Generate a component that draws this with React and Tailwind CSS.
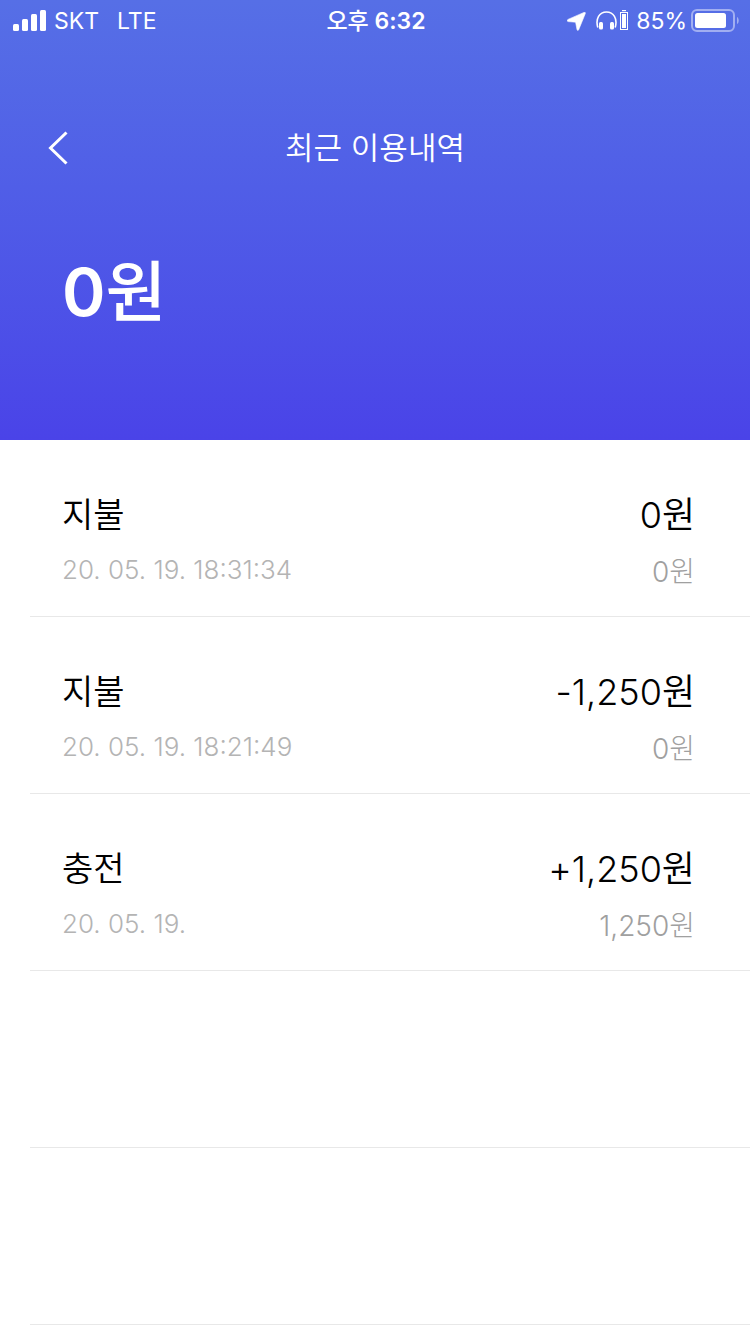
const transactions = [
  { id: 1, type: '지불', date: '20. 05. 19. 18:31:34', amount: '0원', balance: '0원' },
  { id: 2, type: '지불', date: '20. 05. 19. 18:21:49', amount: '-1,250원', balance: '0원' },
  { id: 3, type: '충전', date: '20. 05. 19.', amount: '+1,250원', balance: '1,250원' },
];

const emptyRows = [4, 5];

const SignalIcon = () => (
  <svg width="33" height="22" viewBox="0 0 33 22" fill="currentColor" aria-hidden="true">
    <rect x="0" y="14" width="6" height="7" rx="1.5" />
    <rect x="9" y="9" width="6" height="12" rx="1.5" />
    <rect x="18" y="4" width="6" height="17" rx="1.5" />
    <rect x="27" y="0" width="6" height="21" rx="1.5" />
  </svg>
);

const LocationIcon = () => (
  <svg width="19" height="19" viewBox="0 0 19 19" fill="currentColor" aria-hidden="true">
    <path d="M17 0.4 L1 7.4 C-0.2 8 0 9.4 1.2 9.6 L8.6 10.2 L10 17.6 C10.2 18.6 11.3 18.7 11.7 17.7 L18.3 1.6 C18.7 0.6 18 -0.1 17 0.4 Z" stroke="currentColor" strokeWidth="0.6" />
  </svg>
);

const HeadphonesIcon = () => (
  <svg width="32" height="22" viewBox="0 0 32 22" aria-hidden="true">
    <path d="M1.8 17.5 C-0.8 8.5 3.5 2 10.5 2 C17.5 2 21.8 8.5 19.2 17.5" fill="none" stroke="currentColor" strokeWidth="1.6" />
    <rect x="3" y="12" width="4" height="7.5" rx="1.5" fill="currentColor" />
    <rect x="14" y="12" width="4" height="7.5" rx="1.5" fill="currentColor" />
    <rect x="24.5" y="2.5" width="7" height="17" fill="none" stroke="currentColor" />
    <rect x="26" y="4" width="4" height="14" fill="currentColor" />
    <rect x="26" y="0" width="4" height="1.2" fill="currentColor" />
  </svg>
);

const BatteryIcon = () => (
  <svg width="48" height="24" viewBox="0 0 48 24" aria-hidden="true">
    <rect x="1" y="1" width="42" height="21" rx="5" fill="none" stroke="currentColor" strokeOpacity="0.45" strokeWidth="2" />
    <rect x="4" y="4" width="31" height="15" rx="2.5" fill="currentColor" />
    <path d="M46 8 C48.3 9 48.3 14 46 15 Z" fill="currentColor" fillOpacity="0.45" />
  </svg>
);

const StatusBar = () => (
  <div className="grid grid-cols-[1fr_auto_1fr] items-center h-10 pl-[13px] pr-[11px] text-[23px] leading-[42px]">
    <div className="flex items-center">
      <SignalIcon />
      <span className="ml-2">SKT</span>
      <span className="ml-[18px]">LTE</span>
    </div>
    <div className="font-semibold"><span className="font-medium">오후</span> 6:32</div>
    <div className="flex items-center justify-end">
      <LocationIcon />
      <span className="ml-[10px]"><HeadphonesIcon /></span>
      <span className="ml-2">85%</span>
      <span className="ml-1"><BatteryIcon /></span>
    </div>
  </div>
);

const TransactionRow = ({ item }) => (
  <li className="flex justify-between h-[177px] pl-8 pr-[55px] pt-[51px] border-b border-[#e8e8e8]">
    <div>
      <p className="text-[34px] leading-[48px] font-[350]">{item.type}</p>
      <p className="mt-[7px] text-[26px] leading-[48px] font-light text-[#b4b4b4]">{item.date}</p>
    </div>
    <div className="text-right">
      <p className="text-[36px] leading-[48px] font-[350]">{item.amount}</p>
      <p className="mt-[9px] text-[28px] leading-[48px] font-light text-[#a0a0a0]">{item.balance}</p>
    </div>
  </li>
);

const App = () => {
  return (
    <div className="min-h-screen bg-white text-black font-['Inter','Noto_Sans_CJK_KR',sans-serif]">
      <header className="h-[440px] bg-linear-to-b from-[#566fe6] to-[#4a43e8] text-white">
        <StatusBar />
        <div className="grid grid-cols-[1fr_auto_1fr] items-center mt-[76px] px-12 h-16">
          <button type="button" aria-label="뒤로" className="justify-self-start">
            <svg width="20" height="34" viewBox="0 0 20 34" fill="none" stroke="currentColor" strokeWidth="3" aria-hidden="true">
              <path d="M18.5 1.5 L2.5 17 L18.5 32.5" />
            </svg>
          </button>
          <h1 className="text-[31px] leading-[48px] font-[350]">최근 이용내역</h1>
        </div>
        <p className="mt-16 px-[62px] text-[66px] leading-[96px] font-semibold">0<span className="font-medium">원</span></p>
      </header>
      <ul className="pl-[30px]">
        {transactions.map((item) => (
          <TransactionRow key={item.id} item={item} />
        ))}
        {emptyRows.map((id) => (
          <li key={id} className="h-[177px] border-b border-[#e8e8e8]" />
        ))}
      </ul>
    </div>
  );
};

export default App;
